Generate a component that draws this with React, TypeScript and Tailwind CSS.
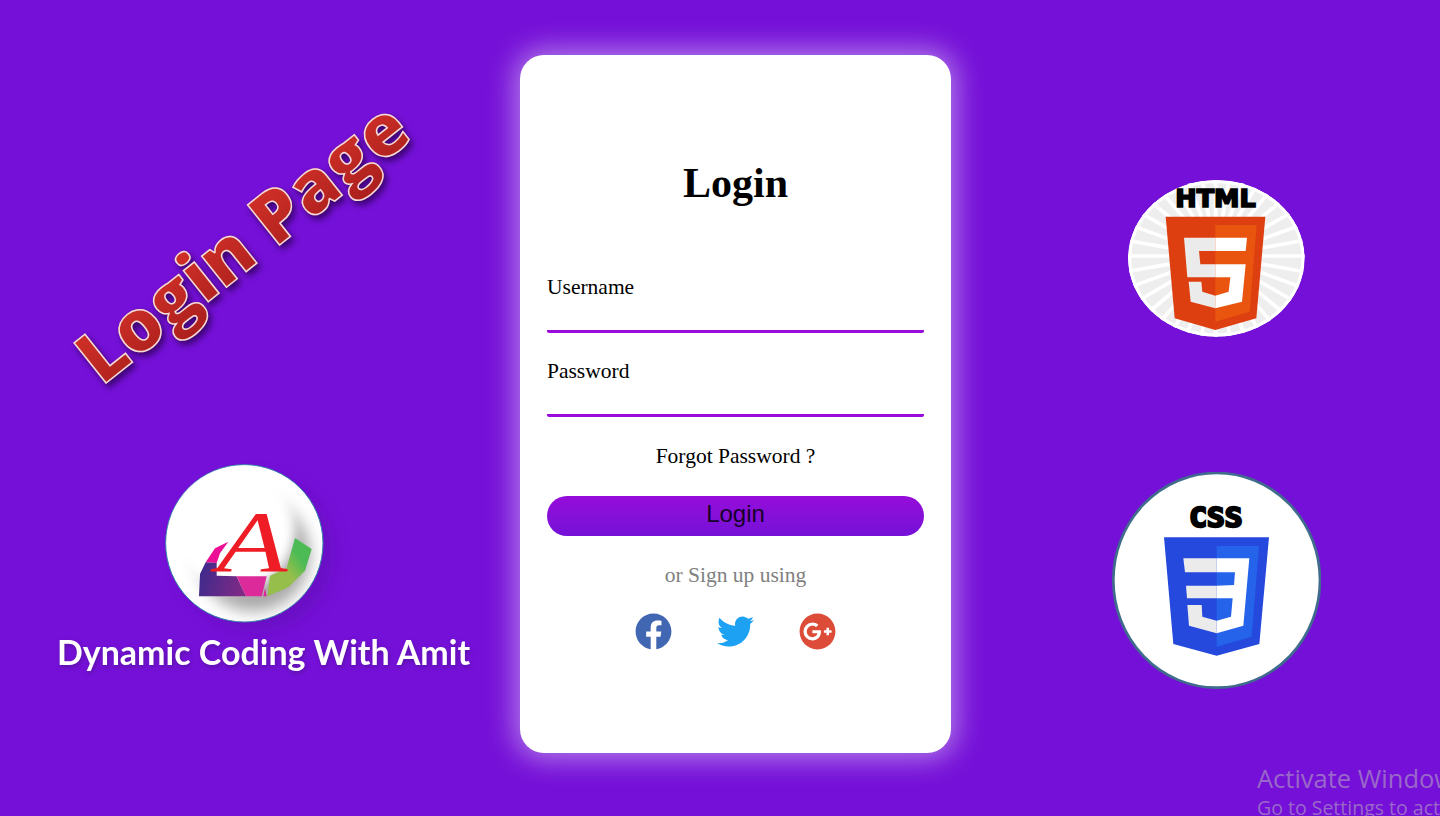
import { FaFacebook, FaTwitter, FaGooglePlus } from "react-icons/fa";

function LogoBadge() {
  return (
    <svg viewBox="375 43 477 471" className="h-[157px] w-[159px] overflow-visible">
      <defs>
        <filter id="soft" x="-40%" y="-40%" width="180%" height="180%">
          <feGaussianBlur stdDeviation="22" />
        </filter>
        <filter id="softer" x="-40%" y="-40%" width="180%" height="180%">
          <feGaussianBlur stdDeviation="16" />
        </filter>
        <clipPath id="disc">
          <circle cx="613" cy="278" r="236" />
        </clipPath>
        <linearGradient id="navy" x1="0" y1="0" x2="1" y2="0.2">
          <stop offset="0" stopColor="#3a2a8c" />
          <stop offset="1" stopColor="#7c2a86" />
        </linearGradient>
        <linearGradient id="leaf" x1="0" y1="1" x2="1" y2="0">
          <stop offset="0.45" stopColor="#95be4b" />
          <stop offset="0.7" stopColor="#4dbb55" />
        </linearGradient>
      </defs>
      <circle cx="650" cy="310" r="236" fill="#5c0cab" opacity="0.4" filter="url(#soft)" />
      <circle cx="613" cy="278" r="236" fill="#fff" stroke="#2f7fa6" strokeWidth="3" />
      <g clipPath="url(#disc)">
        <circle cx="640" cy="312" r="170" fill="#a8a8a8" filter="url(#soft)" />
        <circle cx="580" cy="235" r="185" fill="#fff" filter="url(#softer)" />
      </g>
      <polygon points="565,273 525,293 497,335 530,337 540,308" fill="#ec0f96" />
      <polygon points="497,335 530,337 530,375 590,377 618,437 477,437 480,370" fill="url(#navy)" />
      <polygon points="590,377 680,377 665,437 618,437" fill="#dd2a9a" />
      <polygon points="675,412 680,437 670,437" fill="#e0249a" />
      <polygon points="690,375 740,352 765,262 815,295 795,360 745,410 682,437" fill="url(#leaf)" />
      <text
        x="530"
        y="362"
        textLength="212"
        lengthAdjust="spacingAndGlyphs"
        fontFamily="'Liberation Serif', serif"
        fontStyle="italic"
        fontSize="262"
        fill="#ee1c25"
      >
        A
      </text>
    </svg>
  );
}

function HtmlBadge() {
  const rays = Array.from({ length: 36 }, (_, i) => (i * Math.PI * 2) / 36);
  return (
    <svg viewBox="55 30 531 471" className="h-[157px] w-[177px]">
      <defs>
        <clipPath id="burst">
          <ellipse cx="320" cy="265" rx="265" ry="235" />
        </clipPath>
      </defs>
      <g clipPath="url(#burst)">
        <ellipse cx="320" cy="265" rx="265" ry="235" fill="#eeeeee" />
        {rays.map((a) => (
          <line
            key={a}
            x1={318}
            y1={258}
            x2={318 + Math.cos(a) * 300}
            y2={258 + Math.sin(a) * 300}
            stroke="#fff"
            strokeWidth="11"
          />
        ))}
        <ellipse cx="320" cy="265" rx="260" ry="230" fill="none" stroke="#fff" strokeWidth="10" />
      </g>
      <text
        x="197"
        y="112"
        textLength="241"
        lengthAdjust="spacingAndGlyphs"
        fontFamily="'DejaVu Sans', sans-serif"
        fontWeight="700"
        fontSize="72"
        stroke="#000"
        strokeWidth="5"
        strokeLinejoin="miter"
        fill="#000"
      >
        HTML
      </text>
      <polygon points="168,140 467,140 440,445 317,480 195,445" fill="#dd3f10" />
      <polygon points="317,165 441,165 420,425 317,455" fill="#e9550f" />
      <polygon points="223,203 317,203 317,243 268,243 272,283 317,283 317,322 233,322" fill="#ebebeb" />
      <polygon points="237,335 275,335 278,365 317,377 317,415 243,395" fill="#ebebeb" />
      <polygon points="317,203 412,203 408,243 317,243" fill="#fff" />
      <polygon points="317,283 408,283 397,395 317,415 317,377 357,365 362,322 317,322" fill="#fff" />
    </svg>
  );
}

function CssBadge() {
  return (
    <svg viewBox="36 36 627 651" className="h-[217px] w-[209px]">
      <ellipse cx="350" cy="361" rx="310" ry="322" fill="#fff" stroke="#3f6c8c" strokeWidth="8" />
      <text
        x="268"
        y="202"
        textLength="159"
        lengthAdjust="spacingAndGlyphs"
        fontFamily="'DejaVu Sans Mono', monospace"
        fontWeight="700"
        fontSize="78"
        stroke="#000"
        strokeWidth="7"
        strokeLinejoin="miter"
        fill="#000"
      >
        CSS
      </text>
      <polygon points="192,232 507,232 478,552 350,587 220,552" fill="#2449dc" />
      <polygon points="350,258 477,258 455,530 350,560" fill="#2563eb" />
      <polygon points="250,295 350,295 350,337 255,337" fill="#ebebeb" />
      <polygon points="258,377 350,377 350,415 261,415" fill="#ebebeb" />
      <polygon points="262,435 305,435 307,470 350,482 350,520 267,497" fill="#ebebeb" />
      <polygon points="350,295 448,295 430,497 350,520 350,482 393,470 398,415 350,415 350,377 402,375 405,337 350,337" fill="#fff" />
    </svg>
  );
}

function LoginCard() {
  return (
    <div className="flex h-[698px] w-[431px] shrink-0 flex-col rounded-[24px] bg-white px-[27px] pt-[103px] font-['Liberation_Serif',serif] shadow-[0_0_28px_6px_rgba(255,255,255,0.45)]">
      <h1 className="text-center text-[42px] leading-[50px] font-bold text-black">Login</h1>
      <label className="mt-[66px] block text-[21.5px] leading-[26px] text-black">Username</label>
      <input className="h-[33px] w-full rounded-[2px] border-b-[3px] border-[#9a0bdc] outline-none" />
      <label className="mt-[25px] block text-[21.5px] leading-[26px] text-black">Password</label>
      <input
        type="password"
        className="h-[33px] w-full rounded-[2px] border-b-[3px] border-[#9a0bdc] outline-none"
      />
      <p className="mt-[26px] text-center text-[21.5px] leading-[26px] text-black">Forgot Password ?</p>
      <button className="mt-[27px] h-[40px] w-full rounded-[20px] bg-linear-to-b from-[#960bd9] to-[#7510d8] pb-[4px] font-['Liberation_Sans',sans-serif] text-[24px] text-[#16002b]">
        Login
      </button>
      <p className="mt-[26px] text-center text-[21.5px] leading-[26px] text-[#808080]">or Sign up using</p>
      <div className="mt-[25px] flex items-center justify-center gap-[45px]">
        <FaFacebook className="h-[37px] w-[37px] text-[#4267b2]" />
        <FaTwitter className="h-[37px] w-[37px] text-[#1da1f2]" />
        <FaGooglePlus className="h-[37px] w-[37px] text-[#dd4b39]" />
      </div>
    </div>
  );
}

export default function App() {
  return (
    <div className="relative flex h-[816px] w-[1440px] items-start overflow-hidden bg-[#7510d8] pt-[55px]">
      <div className="flex w-[520px] shrink-0 flex-col">
        <div className="flex h-[410px] items-center justify-center pr-[38px] pb-[40px] drop-shadow-[3px_4px_3px_rgba(40,0,80,0.75)]">
          <span className="rotate-[-38.5deg] whitespace-nowrap bg-linear-to-b from-[#dd352b] to-[#a81e1c] bg-clip-text font-['Open_Sans',sans-serif] text-[72px] leading-[1.4] font-extrabold text-transparent [-webkit-text-stroke:1.5px_#f3dcdc]">
            Login Page
          </span>
        </div>
        <div className="ml-[165px]">
          <LogoBadge />
        </div>
        <p className="mt-[10px] ml-[57px] font-['Lato',sans-serif] text-[34px] leading-[40px] font-bold whitespace-nowrap text-white drop-shadow-[1px_2px_2px_rgba(60,20,110,0.5)]">
          Dynamic Coding With Amit
        </p>
      </div>

      <LoginCard />

      <div className="flex flex-1 flex-col items-start pt-[125px] pl-[161px]">
        <div className="ml-[16px]">
          <HtmlBadge />
        </div>
        <div className="mt-[135px]">
          <CssBadge />
        </div>
      </div>

      <div className="absolute top-[761px] left-[1257px] font-['Open_Sans',sans-serif] whitespace-nowrap text-[#9a68c9]">
        <p className="text-[25.5px] leading-[34px]">Activate Windows</p>
        <p className="text-[19.5px] leading-[26px]">Go to Settings to activate Windows.</p>
      </div>
    </div>
  );
}
